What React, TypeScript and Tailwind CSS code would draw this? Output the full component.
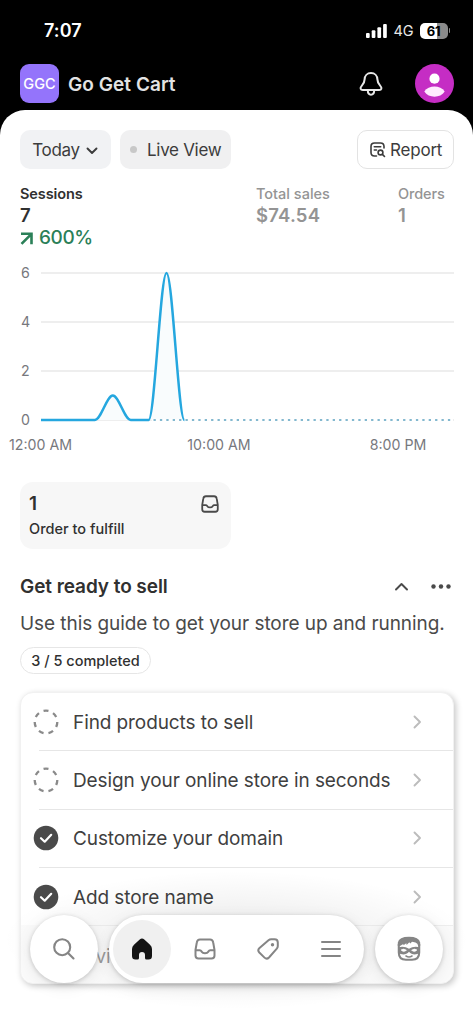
import { ReactNode } from "react";
import clsx from "clsx";

const GRID = [
  { label: "6", y: 8 },
  { label: "4", y: 57 },
  { label: "2", y: 106 },
  { label: "0", y: 155 },
];

const TASKS = [
  { title: "Find products to sell", done: false },
  { title: "Design your online store in seconds", done: false },
  { title: "Customize your domain", done: true },
  { title: "Add store name", done: true },
  { title: "Review shipping rates", done: true },
];

function StatusBar() {
  return (
    <div className="flex h-[60px] items-center justify-between pl-11 pr-[22px] pt-px text-white">
      <span className="text-[18px] font-semibold leading-6 tracking-[0.1px]">7:07</span>
      <div className="flex items-center">
        <svg width="21" height="14" viewBox="0 0 21 14" fill="currentColor">
          <rect x="0" y="9" width="3.7" height="5" rx="1" />
          <rect x="5.7" y="6.3" width="3.7" height="7.7" rx="1" />
          <rect x="11.4" y="3.3" width="3.7" height="10.7" rx="1" />
          <rect x="17.1" y="0" width="3.7" height="14" rx="1" />
        </svg>
        <span className="ml-[7px] w-[20px] text-[14.500px] leading-5 tracking-[-0.2px] text-[#e8e8e8]">4G</span>
        <div className="ml-[6px] flex h-4 w-7 items-center justify-center rounded-[5px] bg-linear-to-r from-white from-62% to-[#8b8b8b] to-62% text-[13px] font-bold leading-4 tracking-[-0.2px] text-black">
          61
        </div>
        <div className="ml-px mr-px h-[5px] w-[1.500px] rounded-r-full bg-[#8b8b8b]" />
      </div>
    </div>
  );
}

function StoreHeader() {
  return (
    <div className="flex h-[50px] items-start px-5 pt-[4px]">
      <div className="flex h-[39px] w-[39px] items-center justify-center rounded-[9px] bg-[#9474fb] pt-px text-[14.500px] font-medium text-white">
        GGC
      </div>
      <h1 className="ml-[9px] text-[19px] font-semibold leading-[42px] tracking-[0.050px] text-[#e3e3e3]">Go Get Cart</h1>
      <svg className="ml-auto mr-[32px] mt-[7px]" width="26" height="26" viewBox="0 0 26 26" fill="none" stroke="#e8e8e8" strokeWidth="2" strokeLinejoin="round">
        <path d="M14 2C10.200 2 7.700 4.800 7.600 8.400C7.500 12 6.800 12.800 4.700 14.900C2.700 17 3.500 19 5.800 19H22.200C24.500 19 25.300 17 23.300 14.900C21.200 12.800 20.500 12 20.400 8.400C20.300 4.800 17.800 2 14 2Z" />
        <path d="M10.800 19C10.800 25.300 17.200 25.300 17.200 19" />
      </svg>
      <svg className="-mr-px" width="39" height="39" viewBox="0 0 39 39">
        <circle cx="19.500" cy="19.500" r="19.500" fill="#c52dc4" />
        <circle cx="19.500" cy="14.700" r="5.100" fill="#fff" />
        <path d="M9.300 27.500C13.500 20.900 25.500 20.900 29.700 27.500C25.500 34.400 13.500 34.400 9.300 27.500Z" fill="#ffeaff" />
      </svg>
    </div>
  );
}

function InboxIcon({ className, size = 22, stroke = 2 }: { className?: string; size?: number; stroke?: number }) {
  return (
    <svg className={className} width={size} height={size} viewBox="0 0 22 22" fill="none" stroke="currentColor" strokeWidth={stroke} strokeLinejoin="round">
      <path d="M6 1.500H16C18 1.500 18.900 2.500 19.200 4.500L20.500 12V17.500Q20.500 20.500 17.500 20.500H4.500Q1.500 20.500 1.500 17.500V12L2.800 4.500C3.100 2.500 4 1.500 6 1.500Z" />
      <path d="M1.700 12.300H5.800C7 12.300 7.300 13 7.900 13.900C8.400 14.800 9 15.200 11 15.200S13.600 14.800 14.100 13.900C14.700 13 15 12.300 16.200 12.300H20.300" />
    </svg>
  );
}

function Chevron({ className, d }: { className?: string; d: string }) {
  return (
    <svg className={className} width="14" height="14" viewBox="0 0 14 14" fill="none" stroke="currentColor" strokeWidth="1.900" strokeLinecap="round" strokeLinejoin="round">
      <path d={d} />
    </svg>
  );
}

function Toolbar() {
  return (
    <div className="flex h-[39px] items-stretch px-5 text-[17px] text-[#3c3c3c]">
      <button className="flex w-[91px] items-center rounded-[10px] bg-[#f1f2f4] pl-3">
        <span className="w-[48px] whitespace-nowrap pt-0.5 tracking-[-0.3px]">Today</span>
        <Chevron className="ml-[5px] mt-0.5" d="M2.500 4.500L7 9L11.500 4.500" />
      </button>
      <button className="ml-[9px] flex w-[111px] items-center rounded-[10px] bg-[#f0f0f1] pl-[10px]">
        <span className="h-[7px] w-[7px] rounded-full bg-[#c8c8c8]" />
        <span className="ml-[10px] whitespace-nowrap pt-0.5 tracking-[-0.3px]">Live View</span>
      </button>
      <button className="-mr-px ml-auto flex w-[97px] items-center rounded-[10px] border border-[#e3e3e3] pl-3">
        <svg width="16" height="16" viewBox="0 0 16 16" fill="none" stroke="currentColor" strokeWidth="1.600" strokeLinecap="round">
          <path d="M6.500 14H4.500Q1 14 1 10.500V4.500Q1 1 4.500 1H10.500Q14 1 14 4.500V6" />
          <path d="M4.300 4.800H10.700M4.300 8H6.500" />
          <circle cx="10.500" cy="10.500" r="2.400" />
          <path d="M12.400 12.400L14.500 14.500" />
        </svg>
        <span className="ml-1 pt-0.5 tracking-[-0.2px]">Report</span>
      </button>
    </div>
  );
}

function Metrics() {
  return (
    <div className="mt-4 flex px-5 text-[#949494]">
      <div className="w-[236px] text-[#303030]">
        <p className="text-[14.500px] font-semibold leading-[18px] tracking-[-0.1px]">Sessions</p>
        <p className="mt-px text-[18.500px] font-semibold leading-[22px]">7</p>
        <p className="mt-px flex items-center text-[19px] font-medium leading-[22px] tracking-[-0.4px] text-[#2b8058]">
          <svg className="mr-[6px]" width="13" height="13" viewBox="0 0 13 13" fill="none" stroke="currentColor" strokeWidth="2.600">
            <path d="M1 1.800H11.500V12.300M11.500 1.800L1.500 11.800" />
          </svg>
          600%
        </p>
      </div>
      <div className="w-[142px]">
        <p className="text-[14.500px] font-medium leading-[18px]">Total sales</p>
        <p className="mt-px text-[18.500px] font-semibold leading-[22px] tracking-[0.2px]">$74.54</p>
      </div>
      <div>
        <p className="text-[14.500px] font-medium leading-[18px] tracking-[-0.1px]">Orders</p>
        <p className="mt-px text-[18.500px] font-semibold leading-[22px]">1</p>
      </div>
    </div>
  );
}

function SessionsChart() {
  return (
    <div className="mt-4">
      <svg className="block" width="473" height="190" viewBox="0 0 473 190" fontFamily="Inter, sans-serif" fontSize="14.200" fill="#77787d">
        {GRID.map((line) => (
          <g key={line.label}>
            <text x="21" y={line.y + 5}>{line.label}</text>
            <path d={`M41 ${line.y}H454`} stroke="#e8e8e8" strokeWidth="1.300" />
          </g>
        ))}
        <path d="M41 155H94.900C100.900 155 106.800 130.500 112.800 130.500S124.700 155 130.700 155H148.600C154.600 155 160.500 8 166.500 8S178.400 155 184.400 155Z" fill="#f9fcfd" />
        <path d="M152 155H453" stroke="#fff" strokeWidth="2" />
        <path d="M153.500 155H453" stroke="#83b8cf" strokeWidth="2" strokeDasharray="2.300 4.100" />
        <path
          d="M41 155H94.900C100.900 155 106.800 130.500 112.800 130.500S124.700 155 130.700 155H148.600C154.600 155 160.500 8 166.500 8S178.400 155 184.400 155"
          fill="none"
          stroke="#25a7df"
          strokeWidth="2.500"
        />
        <text x="40.500" y="185" textAnchor="middle">12:00 AM</text>
        <text x="219" y="185" textAnchor="middle">10:00 AM</text>
        <text x="398" y="185" textAnchor="middle">8:00 PM</text>
      </svg>
    </div>
  );
}

function FulfillCard() {
  return (
    <div className="ml-5 mt-[27px] flex h-[67px] w-[211px] justify-between rounded-[13px] bg-[#f7f7f7] pl-[9px] pr-[12px] pt-[10px] text-[#303030]">
      <div>
        <p className="text-[19px] font-semibold leading-6">1</p>
        <p className="mt-px text-[14.500px] font-medium leading-6 tracking-[0.02px]">Order to fulfill</p>
      </div>
      <InboxIcon size={18} stroke={2.2} className="mt-[3px] text-[#4a4a4a]" />
    </div>
  );
}

function TaskStatus({ done }: { done: boolean }) {
  if (!done) {
    return (
      <svg width="26" height="26" viewBox="0 0 26 26" fill="none">
        <circle cx="13" cy="13" r="11.300" pathLength="63" stroke="#8a8a8a" strokeWidth="2.300" strokeDasharray="4.500 4.500" />
      </svg>
    );
  }
  return (
    <svg width="26" height="26" viewBox="0 0 26 26" fill="none">
      <circle cx="13" cy="13" r="12.300" fill="#4a4a4a" />
      <path d="M8 13.200L11.700 16.700L18.200 9.800" stroke="#fff" strokeWidth="2.200" strokeLinecap="round" strokeLinejoin="round" />
    </svg>
  );
}

function SetupGuide() {
  return (
    <section className="mt-[26px] px-5 text-[#303030]">
      <div className="flex h-6 items-center">
        <h2 className="text-[19px] font-semibold tracking-[-0.070px]">Get ready to sell</h2>
        <Chevron className="ml-auto mr-[22px] text-[#4a4a4a]" d="M1 9.500L6.500 4L12 9.500" />
        <svg className="mr-0.5" width="20" height="6" viewBox="0 0 20 6" fill="#4a4a4a">
          <circle cx="2.500" cy="2.500" r="2.200" />
          <circle cx="10" cy="2.500" r="2.200" />
          <circle cx="17.500" cy="2.500" r="2.200" />
        </svg>
      </div>
      <p className="mt-[13px] whitespace-nowrap text-[19px] leading-6 tracking-[-0.060px] text-[#4a4a4a]">Use this guide to get your store up and running.</p>
      <div className="mt-[11px] flex h-[27px] w-[131px] items-center justify-center whitespace-nowrap rounded-full border border-[#e6e6e6] text-[14.500px] font-medium">
        3 / 5 completed
      </div>
      <ul className="mt-[18px] h-[292px] w-[434px] rounded-[13px] border border-[#f1f1f1] bg-white shadow-[2px_2px_6px_rgba(0,0,0,0.22)]">
        {TASKS.map((task, i) => (
          <li key={task.title} className="flex h-[58.300px] items-stretch">
            <div className={clsx("ml-[18px] flex flex-1 items-center", i < TASKS.length - 1 && "border-b border-[#e6e6e6]")}>
              <span className="-ml-[6px]">
                <TaskStatus done={task.done} />
              </span>
              <span className="ml-[14px] flex-1 whitespace-nowrap pt-[3px] text-[19px] tracking-[-0.090px] text-[#3f3f3f]">{task.title}</span>
              <Chevron className="mr-[29px] text-[#bcbcbc]" d="M4.500 1.500L10 7L4.500 12.500" />
            </div>
          </li>
        ))}
      </ul>
    </section>
  );
}

function NavCircle({ children }: { children: ReactNode }) {
  return (
    <button className="flex h-[68px] w-[68px] items-center justify-center rounded-full bg-white shadow-[0_1px_4px_rgba(0,0,0,0.18),0_4px_16px_rgba(0,0,0,0.08)]">
      {children}
    </button>
  );
}

function BottomNav() {
  return (
    <nav className="absolute bottom-[41px] left-[30px] flex text-[#858585]">
      <NavCircle>
        <svg width="22" height="22" viewBox="0 0 22 22" fill="none" stroke="currentColor" strokeWidth="2.100" strokeLinecap="round">
          <circle cx="9.200" cy="9.200" r="8" />
          <path d="M15 15L20.500 20.500" />
        </svg>
      </NavCircle>
      <div className="ml-[11px] flex h-[68px] w-[255px] items-center rounded-full bg-white pl-1 shadow-[0_1px_4px_rgba(0,0,0,0.18),0_4px_16px_rgba(0,0,0,0.08)]">
        <button className="flex h-[58px] w-[58px] items-center justify-center rounded-full bg-[#f0f0f0] text-[#141414]">
          <svg width="22" height="22" viewBox="0 0 22 22" fill="currentColor">
            <path d="M8.700 1.500Q11 -.500 13.300 1.500L19 6.700Q21 8.500 21 11V18Q21 21.500 17.500 21.500H15.500Q14 21.500 14 20V17Q14 14 11 14T8 17V20Q8 21.500 6.500 21.500H4.500Q1 21.500 1 18V11Q1 8.500 3 6.700Z" />
          </svg>
        </button>
        <InboxIcon className="ml-[23px]" />
        <svg className="ml-[41px]" width="22" height="22" viewBox="0 0 22 22" fill="none" stroke="currentColor" strokeWidth="2" strokeLinejoin="round">
          <path d="M11.500 2.200Q12.700 1.200 14.200 1.200H17.500Q20.800 1.200 20.800 4.500V8Q20.800 9.500 19.800 10.700L12 19.500Q9.800 21.800 7.500 19.600L2.300 14.500Q.200 12.200 2.500 10Z" />
          <circle cx="15.500" cy="6.800" r="1.700" fill="currentColor" stroke="none" />
        </svg>
        <svg className="ml-[42px]" width="20" height="18" viewBox="0 0 20 18" fill="none" stroke="currentColor" strokeWidth="2" strokeLinecap="round">
          <path d="M1 2H19M1 9H19M1 16H19" />
        </svg>
      </div>
      <div className="ml-[11px]">
        <NavCircle>
          <svg className="-mt-px" width="24" height="25" viewBox="0 0 24 25" fill="none" stroke="currentColor">
            <path d="M1.800 8V16.500Q1.800 23.800 9 23.800H15Q22.200 23.800 22.200 16.500V8" strokeWidth="2.100" />
            <path d="M.800 10V6.500Q2 .700 12 .700T23.200 6.500V10H21.300Q20.800 7.300 18.500 6.600L15 5.800L13.300 7.600L12.300 6.300L9.600 9L9.300 7.200L6.500 9.300L6.300 8L3 10Z" fill="currentColor" stroke="none" />
            <path d="M1 11.500C5 10 9 10.800 12 12.800C15 10.800 19 10 23 11.500V16.500C19 19.500 14.800 19 12 15.800C9.200 19 5 19.500 1 16.500Z" fill="currentColor" stroke="none" />
            <path d="M4 14Q6.500 12 9.500 14.300Q6.500 17 4 14ZM20 14Q17.500 12 14.500 14.300Q17.500 17 20 14Z" fill="#fff" stroke="#fff" strokeWidth=".500" />
            <path d="M9 20Q12 22 15 20" strokeWidth="1.600" strokeLinecap="round" />
          </svg>
        </NavCircle>
      </div>
    </nav>
  );
}

export default function App() {
  return (
    <div className="relative h-[1024px] w-[473px] overflow-hidden bg-black font-[Inter,sans-serif]">
      <StatusBar />
      <StoreHeader />
      <main className="h-[914px] rounded-t-[25px] bg-white pt-5">
        <Toolbar />
        <Metrics />
        <SessionsChart />
        <FulfillCard />
        <SetupGuide />
      </main>
      {/* soft fade behind the floating navigation */}
      <div className="pointer-events-none absolute inset-x-0 bottom-[14px] h-[140px] bg-radial from-black/9 to-transparent to-70%" />
      <div className="pointer-events-none absolute bottom-[41px] left-[21px] h-[58px] w-[432px] rounded-b-[13px] bg-[#f5f5f5]/50" />
      <BottomNav />
    </div>
  );
}
